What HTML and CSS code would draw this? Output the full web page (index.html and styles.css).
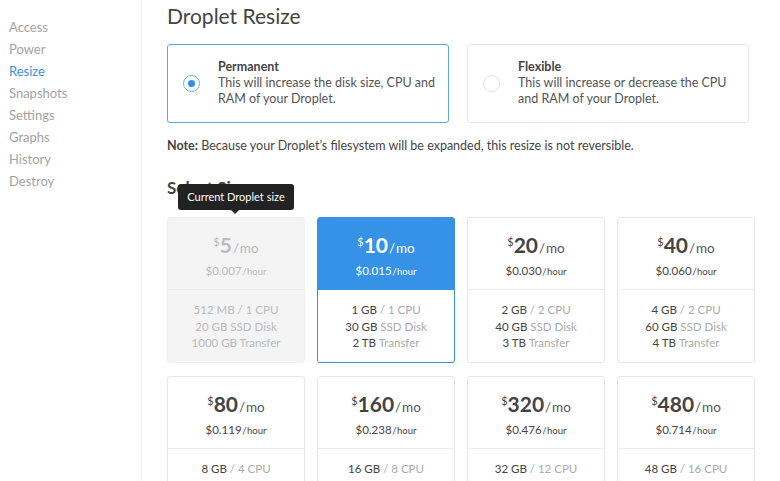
FILE: index.html
```html
<!DOCTYPE html>
<html>
<head>
<meta charset="utf-8">
<link rel="stylesheet" href="styles.css">
</head>
<body>
<div class="layout">
  <nav class="sidebar">
    <a class="nav-item">Access</a>
    <a class="nav-item">Power</a>
    <a class="nav-item active">Resize</a>
    <a class="nav-item">Snapshots</a>
    <a class="nav-item">Settings</a>
    <a class="nav-item">Graphs</a>
    <a class="nav-item">History</a>
    <a class="nav-item">Destroy</a>
  </nav>
  <main class="main">
    <h1 class="title">Droplet Resize</h1>
    <div class="options">
      <div class="option selected">
        <span class="radio checked"></span>
        <div class="option-text">
          <div class="option-name">Permanent</div>
          <div class="option-desc">This will increase the disk size, CPU and RAM of your Droplet.</div>
        </div>
      </div>
      <div class="option">
        <span class="radio"></span>
        <div class="option-text">
          <div class="option-name">Flexible</div>
          <div class="option-desc">This will increase or decrease the CPU and RAM of your Droplet.</div>
        </div>
      </div>
    </div>
    <p class="note"><b>Note:</b> Because your Droplet’s filesystem will be expanded, this resize is not reversible.</p>
    <h2 class="subtitle">Select Size</h2>
    <div class="sizes">
      <div class="size current">
        <div class="tooltip">Current Droplet size</div>
        <div class="size-top">
          <div class="price"><sup>$</sup><strong>5</strong><span class="per">/&#8202;mo</span></div>
          <div class="hourly">$0.007<span class="per-h">&#8202;/&#8202;hour</span></div>
        </div>
        <div class="size-specs">
          <div>512 MB <span>/ 1 CPU</span></div>
          <div>20 GB <span>SSD Disk</span></div>
          <div>1000 GB <span>Transfer</span></div>
        </div>
      </div>
      <div class="size selected">
        <div class="size-top">
          <div class="price"><sup>$</sup><strong>10</strong><span class="per">/&#8202;mo</span></div>
          <div class="hourly">$0.015<span class="per-h">&#8202;/&#8202;hour</span></div>
        </div>
        <div class="size-specs">
          <div>1 GB <span>/ 1 CPU</span></div>
          <div>30 GB <span>SSD Disk</span></div>
          <div>2 TB <span>Transfer</span></div>
        </div>
      </div>
      <div class="size">
        <div class="size-top">
          <div class="price"><sup>$</sup><strong>20</strong><span class="per">/&#8202;mo</span></div>
          <div class="hourly">$0.030<span class="per-h">&#8202;/&#8202;hour</span></div>
        </div>
        <div class="size-specs">
          <div>2 GB <span>/ 2 CPU</span></div>
          <div>40 GB <span>SSD Disk</span></div>
          <div>3 TB <span>Transfer</span></div>
        </div>
      </div>
      <div class="size">
        <div class="size-top">
          <div class="price"><sup>$</sup><strong>40</strong><span class="per">/&#8202;mo</span></div>
          <div class="hourly">$0.060<span class="per-h">&#8202;/&#8202;hour</span></div>
        </div>
        <div class="size-specs">
          <div>4 GB <span>/ 2 CPU</span></div>
          <div>60 GB <span>SSD Disk</span></div>
          <div>4 TB <span>Transfer</span></div>
        </div>
      </div>
      <div class="size">
        <div class="size-top">
          <div class="price"><sup>$</sup><strong>80</strong><span class="per">/&#8202;mo</span></div>
          <div class="hourly">$0.119<span class="per-h">&#8202;/&#8202;hour</span></div>
        </div>
        <div class="size-specs">
          <div>8 GB <span>/ 4 CPU</span></div>
        </div>
      </div>
      <div class="size">
        <div class="size-top">
          <div class="price"><sup>$</sup><strong>160</strong><span class="per">/&#8202;mo</span></div>
          <div class="hourly">$0.238<span class="per-h">&#8202;/&#8202;hour</span></div>
        </div>
        <div class="size-specs">
          <div>16 GB <span>/ 8 CPU</span></div>
        </div>
      </div>
      <div class="size">
        <div class="size-top">
          <div class="price"><sup>$</sup><strong>320</strong><span class="per">/&#8202;mo</span></div>
          <div class="hourly">$0.476<span class="per-h">&#8202;/&#8202;hour</span></div>
        </div>
        <div class="size-specs">
          <div>32 GB <span>/ 12 CPU</span></div>
        </div>
      </div>
      <div class="size">
        <div class="size-top">
          <div class="price"><sup>$</sup><strong>480</strong><span class="per">/&#8202;mo</span></div>
          <div class="hourly">$0.714<span class="per-h">&#8202;/&#8202;hour</span></div>
        </div>
        <div class="size-specs">
          <div>48 GB <span>/ 16 CPU</span></div>
        </div>
      </div>
    </div>
  </main>
</div>
</body>
</html>
```
FILE: styles.css
```css
* { box-sizing: border-box; }
html, body { margin: 0; padding: 0; background: #fff; overflow: hidden; }
body {
  font-family: "Lato", "Open Sans", "Liberation Sans", sans-serif;
  color: #444;
  width: 780px;
  height: 481px;
}
.layout { display: flex; height: 481px; overflow: hidden; }
.sidebar {
  width: 142px;
  flex: none;
  border-right: 1px solid #efefef;
  padding: 16px 0 0 9px;
  display: flex;
  flex-direction: column;
}
.nav-item {
  font-size: 13px;
  line-height: 22px;
  color: #a3a3a3;
}
.nav-item.active { color: #3b91e3; }
.main {
  flex: 1;
  padding: 0 0 0 25px;
}
.title {
  margin: 0;
  font-weight: 400;
  font-size: 21px;
  line-height: 24px;
  padding-top: 4px;
  color: #444;
}
.options {
  display: grid;
  grid-template-columns: 282px 282px;
  column-gap: 18px;
  margin-top: 16px;
}
.option {
  height: 79px;
  border: 1px solid #e6e6e6;
  border-radius: 3px;
  display: flex;
  align-items: center;
  padding-left: 15px;
}
.option.selected { border-color: #5ea8ea; }
.radio {
  width: 17px;
  height: 17px;
  border-radius: 50%;
  border: 1px solid #e2e2e2;
  flex: none;
  display: flex;
  align-items: center;
  justify-content: center;
}
.radio.checked { border: 1.5px solid #68b0ee; }
.radio.checked::after {
  content: "";
  width: 7px;
  height: 7px;
  border-radius: 50%;
  background: #2f8ee6;
}
.option-text { margin-left: 18px; margin-top: -2px; }
.option-name {
  font-size: 12.5px;
  font-weight: 700;
  line-height: 16px;
  color: #444;
}
.option-desc {
  font-size: 12.5px;
  line-height: 15.5px;
  color: #555;
  width: 230px;
}
.note {
  margin: 15px 0 0;
  font-size: 12.5px;
  line-height: 16px;
  color: #444;
}
.note b { font-weight: 700; }
.subtitle {
  margin: 24px 0 0;
  font-size: 17px;
  font-weight: 700;
  line-height: 20px;
  color: #444;
}
.sizes {
  margin-top: 19px;
  display: grid;
  grid-template-columns: repeat(4, 138px);
  column-gap: 12px;
  row-gap: 13px;
}
.size {
  position: relative;
  border: 1px solid #e6e6e6;
  border-radius: 3px;
  height: 146px;
  text-align: center;
}
.size-top {
  height: 72px;
  border-bottom: 1px solid #ececec;
  padding-top: 16px;
}
.price {
  font-size: 13px;
  line-height: 22px;
  color: #444;
}
.price sup {
  font-size: 11px;
  vertical-align: top;
  position: relative;
  top: -3px;
}
.price strong { font-size: 21px; font-weight: 700; }
.price .per { color: #555; font-size: 13.5px; margin-left: 1px; }
.hourly {
  font-size: 11.5px;
  line-height: 14px;
  margin-top: 5px;
  color: #444;
}
.per-h { font-size: 9.5px; }
.size-specs {
  padding-top: 12px;
  font-size: 11.5px;
  line-height: 16.5px;
  color: #444;
}
.size-specs span { color: #aaa; }
.size.current { background: #f4f4f4; border-color: #f0f0f0; }
.size.current .price, .size.current .price .per,
.size.current .hourly, .size.current .size-specs,
.size.current .size-specs span { color: #bbb; }
.size.current .size-top { border-bottom-color: #ebebeb; }
.size.selected { border-color: #3b91e3; }
.size.selected .size-top { background: #3592e6; border-bottom-color: #3592e6; }
.size.selected .price, .size.selected .price .per,
.size.selected .hourly { color: #fff; }
.tooltip {
  position: absolute;
  left: 10px;
  top: -34px;
  width: 116px;
  height: 26px;
  background: #222;
  color: #fff;
  border-radius: 3px;
  font-size: 11px;
  line-height: 26px;
  text-align: center;
  z-index: 2;
}
.tooltip::after {
  content: "";
  position: absolute;
  left: 53px;
  bottom: -4px;
  border-left: 4px solid transparent;
  border-right: 4px solid transparent;
  border-top: 4px solid #222;
}
```
